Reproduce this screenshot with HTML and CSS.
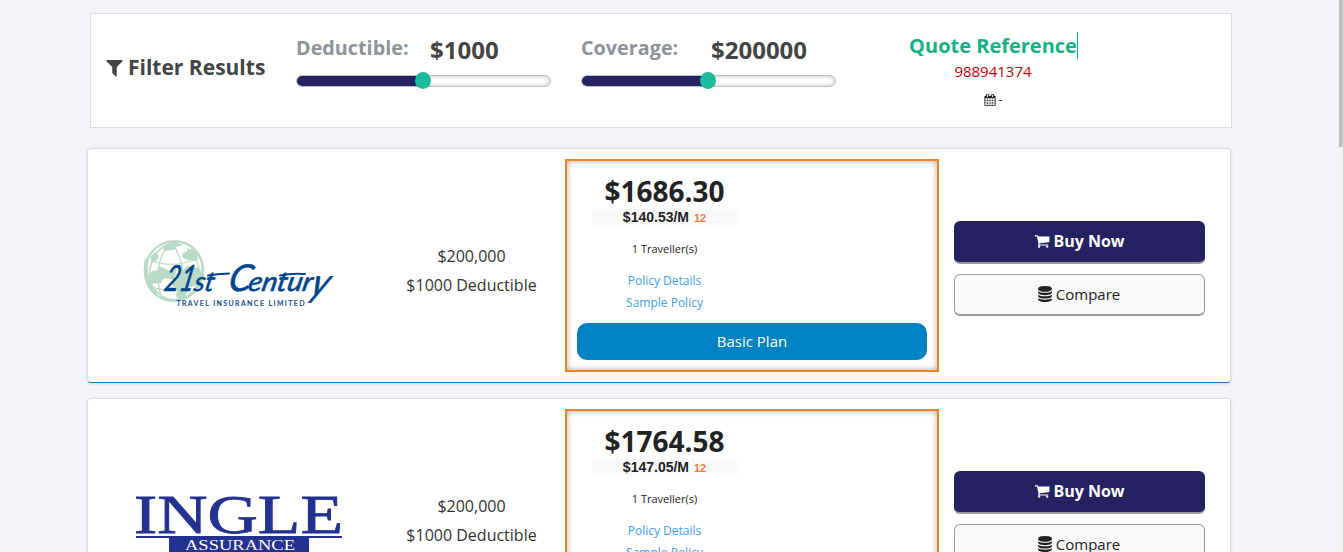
FILE: index.html
```html
<!DOCTYPE html>
<html lang="en">
<head>
<meta charset="utf-8">
<title>Quotes</title>
<link rel="stylesheet" href="styles.css">
</head>
<body>
<svg width="0" height="0" class="defs">
  <symbol id="filter" viewBox="0 0 1792 1792"><path d="M1595 295q17 41-14 70l-493 493v742q0 42-39 59-13 5-25 5-27 0-45-19l-256-256q-19-19-19-45v-486l-493-493q-31-29-14-70 17-39 59-39h1280q42 0 59 39z"/></symbol>
  <symbol id="cart" viewBox="0 0 1792 1792"><path d="M704 1536q0 52-38 90t-90 38-90-38-38-90 38-90 90-38 90 38 38 90zm896 0q0 52-38 90t-90 38-90-38-38-90 38-90 90-38 90 38 38 90zm128-1088v512q0 24-16.5 42.5t-40.5 21.5l-1044 122q13 60 13 70 0 16-24 64h920q26 0 45 19t19 45-19 45-45 19h-1024q-26 0-45-19t-19-45q0-11 8-31.5t16-36 21.5-40 15.5-29.5l-177-823h-204q-26 0-45-19t-19-45 19-45 45-19h256q16 0 28.5 6.5t19.5 15.5 13 24.5 8 26 5.5 29.5 4.5 26h1201q26 0 45 19t19 45z"/></symbol>
  <symbol id="database" viewBox="0 0 1792 1792"><path d="M896 768q237 0 443-43t325-127v170q0 69-103 128t-280 93.5-385 34.5-385-34.5-280-93.5-103-128v-170q119 84 325 127t443 43zm0 768q237 0 443-43t325-127v170q0 69-103 128t-280 93.5-385 34.5-385-34.5-280-93.5-103-128v-170q119 84 325 127t443 43zm0-384q237 0 443-43t325-127v170q0 69-103 128t-280 93.5-385 34.5-385-34.5-280-93.5-103-128v-170q119 84 325 127t443 43zm0-1152q208 0 385 34.5t280 93.5 103 128v128q0 69-103 128t-280 93.5-385 34.5-385-34.5-280-93.5-103-128v-128q0-69 103-128t280-93.5 385-34.5z"/></symbol>
  <symbol id="calendar" viewBox="0 0 1792 1792"><path d="M192 1664h288v-288h-288v288zm352 0h320v-288h-320v288zm-352-352h288v-320h-288v320zm352 0h320v-320h-320v320zm-352-384h288v-288h-288v288zm736 736h320v-288h-320v288zm-384-736h320v-288h-320v288zm768 736h288v-288h-288v288zm-384-352h320v-320h-320v320zm-352-864v-288q0-13-9.5-22.5t-22.5-9.5h-64q-13 0-22.5 9.5t-9.5 22.5v288q0 13 9.5 22.5t22.5 9.5h64q13 0 22.5-9.5t9.5-22.5zm736 864h288v-320h-288v320zm-384-384h320v-288h-320v288zm384 0h288v-288h-288v288zm32-480v-288q0-13-9.5-22.5t-22.5-9.5h-64q-13 0-22.5 9.5t-9.5 22.5v288q0 13 9.5 22.5t22.5 9.5h64q13 0 22.5-9.5t9.5-22.5zm384-64v1280q0 52-38 90t-90 38h-1408q-52 0-90-38t-38-90v-1280q0-52 38-90t90-38h128v-96q0-66 47-113t113-47h64q66 0 113 47t47 113v96h384v-96q0-66 47-113t113-47h64q66 0 113 47t47 113v96h128q52 0 90 38t38 90z"/></symbol>
</svg>
<div class="page">
  <main class="content">
    <section class="filters">
      <div class="filter-title"><svg class="icon-filter"><use href="#filter"/></svg><span>Filter Results</span></div>
      <div class="slider-group">
        <div class="slider-head deductible"><span class="slider-label">Deductible:</span><span class="slider-value">$1000</span></div>
        <div class="track"><div class="fill" style="width:50%"></div><div class="knob"></div></div>
      </div>
      <div class="slider-group">
        <div class="slider-head coverage"><span class="slider-label">Coverage:</span><span class="slider-value">$200000</span></div>
        <div class="track"><div class="fill" style="width:50%"></div><div class="knob"></div></div>
      </div>
      <div class="reference">
        <div class="ref-title">Quote Reference</div>
        <div class="ref-number">988941374</div>
        <div class="ref-date"><svg class="icon-calendar"><use href="#calendar"/></svg><span>-</span></div>
      </div>
    </section>

    <article class="card">
      <div class="logo-cell">
        <svg class="logo-century" width="200" height="80" viewBox="0 0 200 80">
          <g fill="none" stroke="#b9dac6">
            <ellipse cx="35" cy="37" rx="29" ry="30" fill="#fff" stroke-width="2.2" transform="rotate(20 35 37)"/>
            <ellipse cx="37" cy="37" rx="26" ry="29" stroke-width="1.6" transform="rotate(20 37 37)"/>
            <path d="M8 25Q3 43 17 60" stroke-width="4"/>
            <path d="M28 13Q14 31 22 63M34 11Q48 29 43 67M48 14Q70 36 53 60M14 27Q34 35 61 24M9 52Q34 61 59 49M13 37Q38 45 65 35" stroke-width="1.3"/>
          </g>
          <path fill="#b9dac6" d="M11 23L16 18 20 22 18 26 13 29ZM24 14Q34 6 44 11L37 13 34 16 26 17ZM43 20L53 14 59 21 57 27 49 26 44 24ZM10 39L19 36 20 32 29 36 38 35 35 46 25 44 22 49 12 50ZM37 43L48 32 59 34 65 42 59 51 50 53 45 66 37 63 38 55 32 50Z"/>
          <g class="script-text">
            <text transform="translate(24 56.5) skewX(-12)" font-size="36" textLength="30" lengthAdjust="spacingAndGlyphs">21</text>
            <text transform="translate(54 56.5) skewX(-12)" font-size="27" textLength="20" lengthAdjust="spacingAndGlyphs">st</text>
            <text transform="translate(88 56.5) skewX(-12)" font-size="37" textLength="23" lengthAdjust="spacingAndGlyphs">C</text>
            <text transform="translate(108 56.5) skewX(-12)" font-size="27" textLength="64" lengthAdjust="spacingAndGlyphs">entur</text>
            <text transform="translate(170 60) skewX(-20)" font-size="39" textLength="17" lengthAdjust="spacingAndGlyphs" y="2">y</text>
          </g>
          <text class="logo-caption" x="37.5" y="71.5" textLength="128">TRAVEL INSURANCE LIMITED</text>
          <path d="M69 41.5Q78 40 90 39.5M141 41.5Q152 39 166 40" fill="none" stroke="#00458c" stroke-width="2" stroke-linecap="round"/>
        </svg>
      </div>
      <div class="summary"><div>$200,000</div><div>$1000 Deductible</div></div>
      <div class="plan">
        <div class="price-block">
          <div class="price">$1686.30</div>
          <div class="monthly">$140.53/M <span class="months">12</span></div>
          <div class="travellers">1 Traveller(s)</div>
          <a class="link">Policy Details</a>
          <a class="link">Sample Policy</a>
        </div>
        <div class="plan-name">Basic Plan</div>
      </div>
      <div class="actions">
        <div class="btn buy"><svg class="icon-btn"><use href="#cart"/></svg><span>Buy Now</span></div>
        <div class="btn compare"><svg class="icon-btn"><use href="#database"/></svg><span>Compare</span></div>
      </div>
    </article>

    <article class="card">
      <div class="logo-cell ingle">
        <svg class="logo-ingle" width="220" height="80" viewBox="0 0 220 80">
          <g fill="#233190">
            <text class="ingle-text" x="4" y="48.5" font-size="54" textLength="209" lengthAdjust="spacingAndGlyphs">INGLE</text>
            <rect x="6" y="52" width="206" height="2"/>
            <rect x="39" y="53" width="140" height="20"/>
          </g>
          <text class="ingle-sub" x="55" y="65.5" textLength="110" lengthAdjust="spacingAndGlyphs">ASSURANCE</text>
        </svg>
      </div>
      <div class="summary"><div>$200,000</div><div>$1000 Deductible</div></div>
      <div class="plan">
        <div class="price-block">
          <div class="price">$1764.58</div>
          <div class="monthly">$147.05/M <span class="months">12</span></div>
          <div class="travellers">1 Traveller(s)</div>
          <a class="link">Policy Details</a>
          <a class="link">Sample Policy</a>
        </div>
        <div class="plan-name">Basic Plan</div>
      </div>
      <div class="actions">
        <div class="btn buy"><svg class="icon-btn"><use href="#cart"/></svg><span>Buy Now</span></div>
        <div class="btn compare"><svg class="icon-btn"><use href="#database"/></svg><span>Compare</span></div>
      </div>
    </article>
  </main>
  <div class="scrollbar"><div class="thumb"></div></div>
</div>
</body>
</html>
```
FILE: styles.css
```css
* { box-sizing: border-box; }
body { margin: 0; background: #f3f4f9; font-family: "Open Sans", sans-serif; color: #222; }
.defs { display: none; }
svg { flex: none; }
.page { display: flex; width: 1343px; height: 552px; overflow: hidden; }
.content { width: 1337px; padding: 13px 0 0 87px; }
.scrollbar { width: 6px; height: 552px; background: #f1f1f1; padding-left: 2px; }
.thumb { height: 147px; background: #c1c1c1; }

.filters { display: flex; width: 1142px; height: 115px; margin-left: 3px; background: #fff; border: 1px solid #dcdcdc; padding-left: 15px; }
.filter-title { display: flex; width: 190px; height: 28px; margin-top: 39px; align-items: center; gap: 3px; font-size: 21px; font-weight: 700; line-height: 28px; color: #444; white-space: nowrap; }
.icon-filter { width: 21px; height: 21px; margin: 0 0 0 -2px; fill: #444; }
.slider-group { width: 255px; margin-right: 30px; padding-top: 20px; }
.slider-head { display: flex; height: 34px; white-space: nowrap; }
.slider-label { font-size: 19.8px; line-height: 27px; font-weight: 700; color: #8e9299; }
.slider-value { font-size: 24px; line-height: 32px; font-weight: 700; color: #444; }
.deductible .slider-label { width: 134px; }
.coverage .slider-label { width: 130px; }
.track { position: relative; height: 12px; margin-top: 7px; border: 1px solid #c0c0c0; border-radius: 6px; background: #fff; box-shadow: inset 0 0 4px #bbb; }
.fill { height: 10px; border-radius: 5px 0 0 5px; background: #262262; }
.knob { position: absolute; left: 118px; top: -4px; width: 16px; height: 17px; border-radius: 50%; background: #1abc9c; }
.reference { width: 170px; margin-left: 43px; padding-top: 18px; text-align: center; white-space: nowrap; }
.ref-title { width: 169px; height: 27px; font-size: 20px; line-height: 27px; font-weight: 700; color: #16b083; border-right: 1px solid #16b083; }
.ref-number { width: 168px; height: 25px; font-size: 15px; line-height: 25px; color: #c4000a; }
.ref-date { display: flex; width: 168px; height: 31px; justify-content: center; align-items: center; gap: 3px; font-size: 12px; }
.icon-calendar { width: 12px; height: 12px; fill: #222; }

.card { display: flex; width: 1144px; height: 235px; margin-bottom: 15px; background: #fff; border: 1px solid #dcdcdc; border-bottom-color: #0082c3; border-radius: 4px; box-shadow: 0 1px 3px rgba(0,0,0,.14); }
.filters + .card { margin-top: 20px; }
.logo-cell { width: 302px; padding: 85px 0 0 51px; }
.logo-cell.ingle { padding-left: 42px; }
.script-text { font-family: "Lato", sans-serif; font-style: italic; font-weight: 400; fill: #00458c; stroke: #00458c; stroke-width: .6px; }
.logo-caption { font-family: "Lato", sans-serif; font-size: 7px; font-weight: 400; fill: #00458c; stroke: #00458c; stroke-width: .2px; }
.ingle-text { font-family: "Liberation Serif", serif; stroke: #233190; stroke-width: .8px; }
.ingle-sub { font-family: "Liberation Serif", serif; font-size: 14px; fill: #fff; }
.summary { width: 163px; padding-top: 93px; font-size: 16px; line-height: 29px; text-align: center; color: #333; }
.plan { width: 374px; height: 213px; margin: 10px 15px 0 12px; border: 2px solid #f58220; box-shadow: inset 0 0 6px rgba(0,0,0,.35); padding: 11px 10px 0; }
.price-block { width: 145px; margin-left: 15px; text-align: center; }
.price { height: 37px; font-size: 28px; line-height: 38px; font-weight: 700; }
.monthly { height: 16px; background: #f9f9f9; font-family: "Liberation Sans", sans-serif; font-size: 14px; line-height: 16px; font-weight: 700; white-space: nowrap; }
.months { margin-left: 1px; font-size: 11px; color: #f47a45; }
.travellers { height: 22px; margin: 13px 0 10px; font-size: 11px; line-height: 22px; }
.link { display: block; font-size: 12px; line-height: 22px; color: #3da1ee; }
.plan-name { height: 37px; margin-top: 9px; border-radius: 10px; background: #0082c3; color: #fff; font-size: 15px; line-height: 37px; text-align: center; }
.actions { width: 251px; padding-top: 72px; }
.btn { display: flex; height: 42px; border-radius: 6px; align-items: center; justify-content: center; gap: 3px; font-size: 15px; }
.buy { height: 43px; margin-bottom: 10px; padding-bottom: 2px; background: #262262; border-bottom: 2px solid #999; color: #fff; font-size: 16px; font-weight: 700; }
.compare { padding: 0 2px 1px 0; background: #f9f9f9; border: 1px solid #999; border-bottom-width: 2px; }
.icon-btn { width: 16px; height: 16px; fill: currentColor; }
```
